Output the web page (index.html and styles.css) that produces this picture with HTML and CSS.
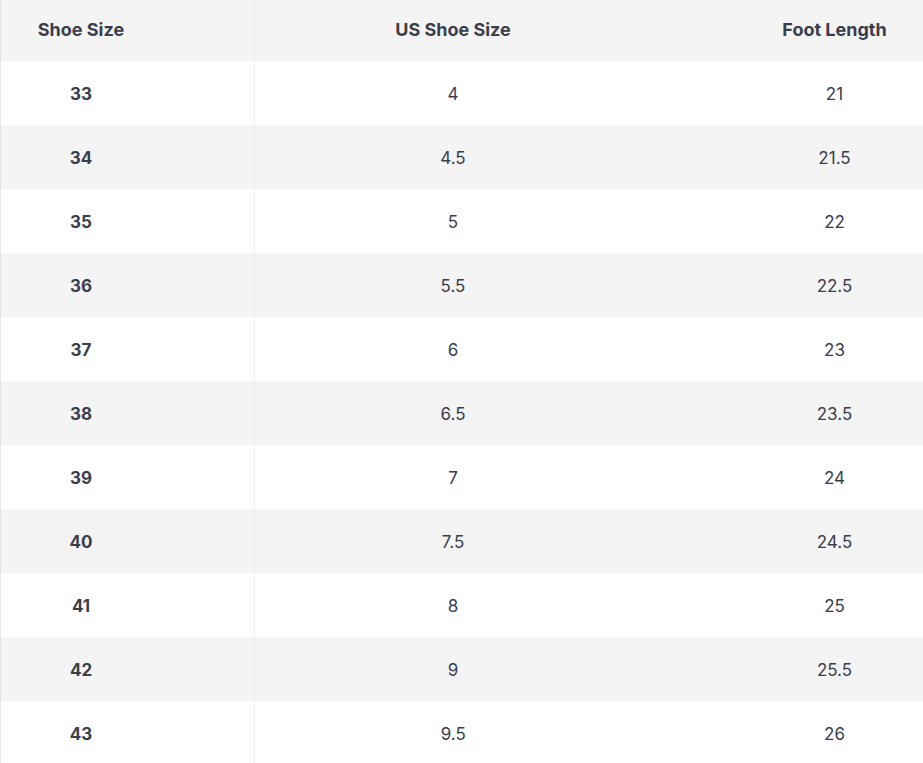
FILE: index.html
```html
<!DOCTYPE html>
<html lang="en">
<head>
<meta charset="utf-8">
<title>Shoe Size Chart</title>
<link rel="stylesheet" href="styles.css">
</head>
<body>
<table class="size-table">
  <thead>
    <tr><th class="c1">Shoe Size</th><th class="c2">US Shoe Size</th><th class="c3">Foot Length</th></tr>
  </thead>
  <tbody>
    <tr><td class="c1">33</td><td class="c2">4</td><td class="c3">21</td></tr>
    <tr><td class="c1">34</td><td class="c2">4.5</td><td class="c3">21.5</td></tr>
    <tr><td class="c1">35</td><td class="c2">5</td><td class="c3">22</td></tr>
    <tr><td class="c1">36</td><td class="c2">5.5</td><td class="c3">22.5</td></tr>
    <tr><td class="c1">37</td><td class="c2">6</td><td class="c3">23</td></tr>
    <tr><td class="c1">38</td><td class="c2">6.5</td><td class="c3">23.5</td></tr>
    <tr><td class="c1">39</td><td class="c2">7</td><td class="c3">24</td></tr>
    <tr><td class="c1">40</td><td class="c2">7.5</td><td class="c3">24.5</td></tr>
    <tr><td class="c1">41</td><td class="c2">8</td><td class="c3">25</td></tr>
    <tr><td class="c1">42</td><td class="c2">9</td><td class="c3">25.5</td></tr>
    <tr><td class="c1">43</td><td class="c2">9.5</td><td class="c3">26</td></tr>
  </tbody>
</table>
</body>
</html>
```
FILE: styles.css
```css
html, body {
  margin: 0;
  padding: 0;
  background: #ffffff;
}
body {
  font-family: Inter, "Noto Sans", sans-serif;
  color: #3a3d4b;
}
.size-table {
  width: 923px;
  border-collapse: collapse;
  table-layout: fixed;
  border-left: 1px solid #e6e6e6;
}
.size-table th,
.size-table td {
  padding: 0;
  text-align: center;
  font-size: 17px;
}
.size-table th {
  height: 58px;
  padding-bottom: 3px;
  font-size: 18px;
  font-weight: 700;
  background: #f4f4f4;
}
.size-table td {
  height: 63px;
  padding-top: 1px;
  font-weight: 400;
}
.size-table tbody tr:nth-child(even) td {
  background: #f4f4f4;
}
.size-table .c1 {
  width: 160px;
  padding-right: 93px;
  border-right: 1px solid #ededed;
}
.size-table td.c1 {
  font-weight: 700;
}
.size-table .c2 {
  width: 396px;
}
.size-table .c3 {
  width: 180px;
  padding-left: 93px;
}
```
